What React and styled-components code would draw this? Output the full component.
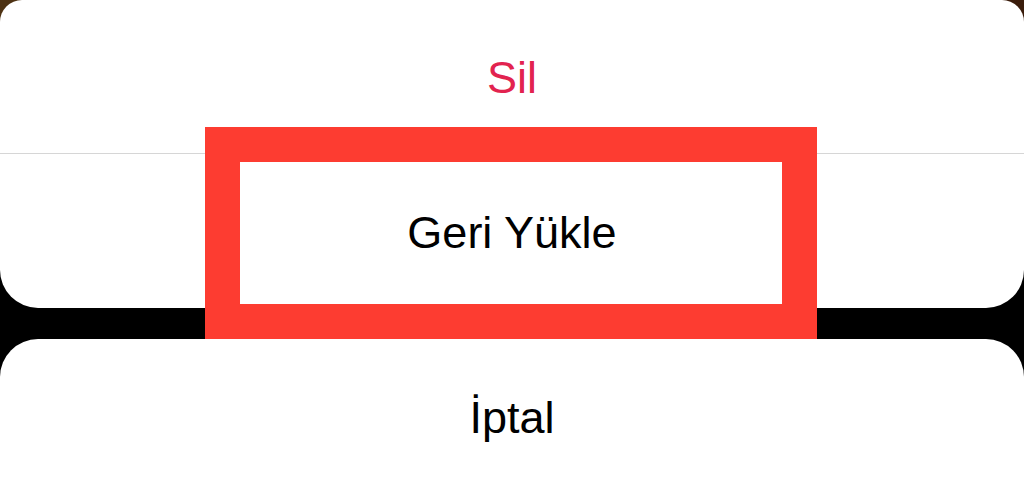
import React from 'react';
import styled, { createGlobalStyle } from 'styled-components';

const GlobalStyle = createGlobalStyle`
  html, body {
    margin: 0;
    padding: 0;
    background: #000;
  }
  body {
    font-family: "Liberation Sans", Arial, sans-serif;
  }
`;

const Screen = styled.div`
  position: relative;
  width: 1024px;
  height: 485px;
  overflow: hidden;
  display: flex;
  flex-direction: column;
  gap: 31px;
  background:
    linear-gradient(to right, #4e3213, #46290f 50%, #3a1c0b) top / 100% 30px no-repeat,
    #000;
`;

const Sheet = styled.div`
  display: flex;
  flex-direction: column;
  background: #fff;
  border-radius: ${(p) => (p.$cancel ? '38px 38px 0 0' : '22px 22px 38px 38px')};
  overflow: hidden;
  flex-shrink: 0;
`;

const Action = styled.div`
  height: ${(p) => (p.$divided ? '154px' : '154px')};
  display: flex;
  align-items: center;
  justify-content: center;
  font-size: 45px;
  color: ${(p) => (p.$destructive ? '#e2234f' : '#000')};
  border-bottom: ${(p) => (p.$divided ? '1px solid #d6d6d6' : 'none')};
  padding-top: 3px;
  box-sizing: border-box;
`;

const Highlight = styled.div`
  position: absolute;
  left: 205px;
  top: 127px;
  width: 612px;
  height: 212px;
  box-sizing: border-box;
  border: 35px solid #fd3c31;
  pointer-events: none;
`;

const App = () => {
  return (
    <>
      <GlobalStyle />
      <Screen>
        <Sheet>
          <Action $destructive $divided>Sil</Action>
          <Action>Geri Yükle</Action>
        </Sheet>
        <Sheet $cancel>
          <Action>İptal</Action>
        </Sheet>
        <Highlight />
      </Screen>
    </>
  );
};

export default App;
